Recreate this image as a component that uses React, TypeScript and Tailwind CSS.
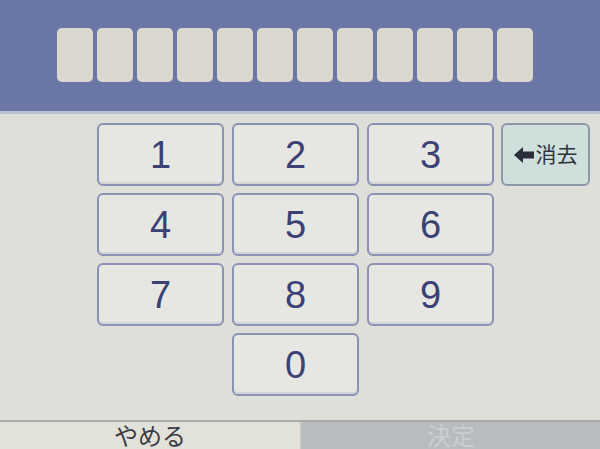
import React from "react"

const digits = [
  ["1", "2", "3"],
  ["4", "5", "6"],
  ["7", "8", "9"],
]

const font = { fontFamily: '"Liberation Sans", "Noto Sans CJK JP", sans-serif' }

function Key({ label }: { label: string }) {
  return (
    <div className="flex h-[63px] w-[127px] items-center justify-center rounded-[6px] border-2 border-[#8c92b4] bg-[#e6e7e3] text-[38px] leading-none text-[#3b4174] shadow-[inset_0_-2px_0_#d2d4d6]">
      {label}
    </div>
  )
}

export default function App() {
  return (
    <div className="flex h-[449px] w-[600px] flex-col overflow-hidden bg-[#dedfd9]" style={font}>
      {/* entry slots */}
      <div className="flex h-[111px] items-center justify-center gap-[4px] bg-[#6b78a7] pr-[10px]">
        {Array.from({ length: 12 }).map((_, i) => (
          <div key={i} className="-mt-[2px] h-[54px] w-[36px] rounded-[5px] bg-[#dad8cf]" />
        ))}
      </div>
      <div className="h-[3px] bg-[#b9bfd4]" />

      {/* keypad */}
      <div className="flex flex-1 flex-col gap-[7px] pl-[97px] pt-[9px]">
        {digits.map((row, r) => (
          <div key={r} className="flex gap-[8px]">
            {row.map((d) => (
              <Key key={d} label={d} />
            ))}
            {r === 0 && (
              <div className="-ml-[1px] flex h-[63px] w-[89px] items-center justify-center gap-[2px] rounded-[6px] border-2 border-[#8c98a8] bg-[#cfdfdb] text-[21px] text-[#2e3440]">
                <svg width="20" height="16" viewBox="0 0 20 16">
                  <path d="M0 8 L9 0 V4.5 H20 V11.5 H9 V16 Z" fill="#2a2e3a" />
                </svg>
                <span>消去</span>
              </div>
            )}
          </div>
        ))}
        <div className="flex pl-[135px]">
          <Key label="0" />
        </div>
      </div>

      {/* bottom bar */}
      <div className="flex h-[29px] border-t-2 border-[#a8aaa8]">
        <div className="flex w-[300px] items-start justify-center bg-[#e2e2da] text-[24px] leading-[30px] text-[#3a3c44]">
          やめる
        </div>
        <div className="flex flex-1 items-start justify-center border-l-2 border-[#c4c6c4] bg-[#b8bcbf] text-[24px] leading-[30px] text-[#cbced1]">
          決定
        </div>
      </div>
    </div>
  )
}
